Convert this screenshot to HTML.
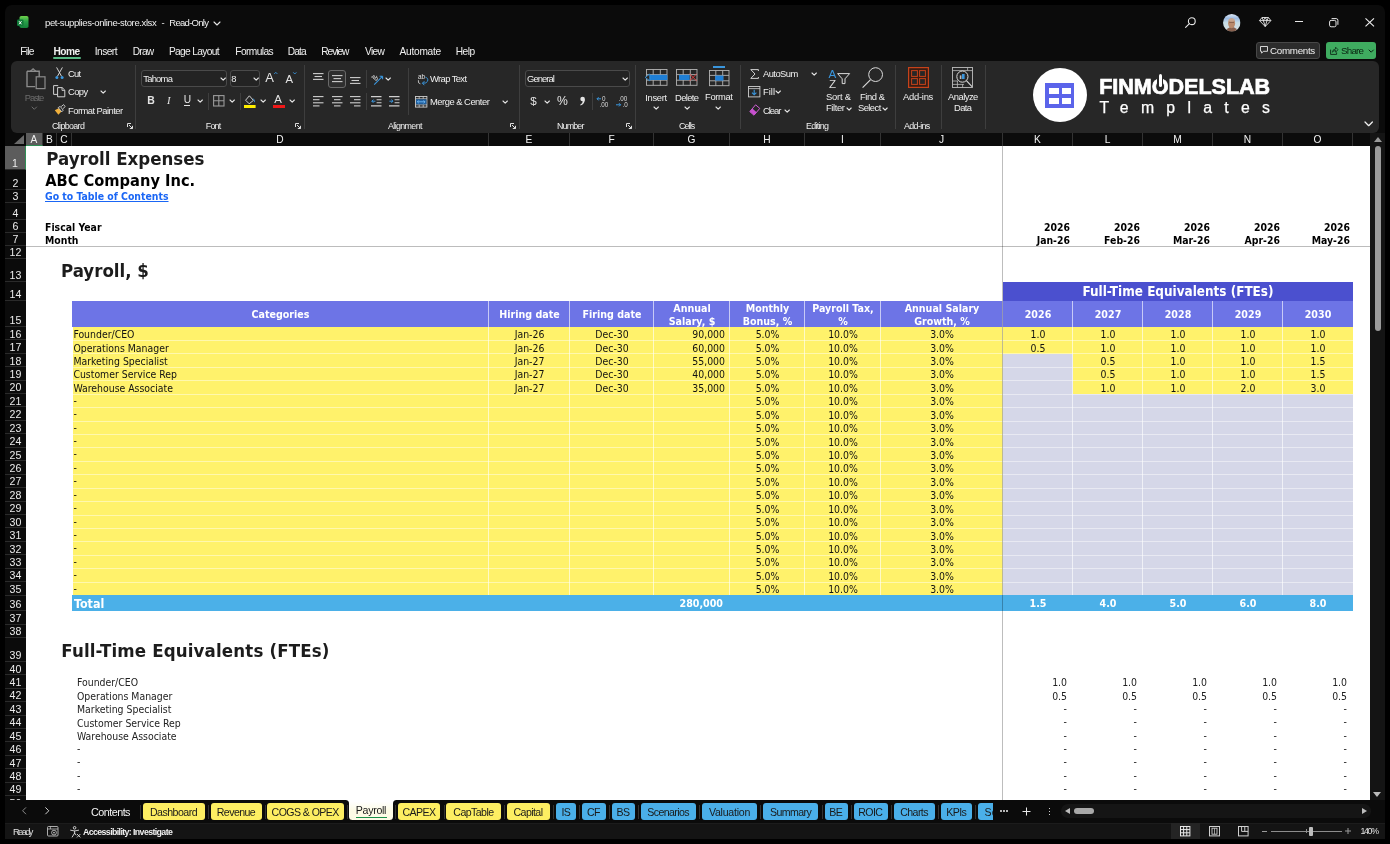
<!DOCTYPE html><html><head><meta charset="utf-8"><title>pet-supplies-online-store.xlsx - Excel</title><style>
*{box-sizing:border-box}
html,body{margin:0;padding:0}
body{width:1390px;height:844px;background:#000;position:relative;overflow:hidden;font-family:"Liberation Sans",sans-serif;color:#fff}
.abs{position:absolute}
#win{position:absolute;left:5px;top:5px;width:1380px;height:834px;background:#0b0b0b;border-radius:7px 7px 0 0}
.ui{font-family:"Liberation Sans",sans-serif;font-size:9.5px;color:#f0f0f0;white-space:nowrap;position:absolute;line-height:12px}
.t{position:absolute;white-space:nowrap;font-family:"DejaVu Sans Condensed","DejaVu Sans",sans-serif;font-stretch:condensed;font-size:10.4px;line-height:13px;color:#111}
.b{font-weight:bold}
.ch{position:absolute;top:133px;height:13px;color:#f2f2f2;font-size:10.2px;line-height:14.4px;text-align:center;font-family:"Liberation Sans",sans-serif;border-right:1px solid #333}
.rh{position:absolute;left:0;width:21px;color:#ececec;font-size:10.6px;text-align:center;font-family:"Liberation Sans",sans-serif;border-bottom:1px solid #2a2a2a}
.rh span{position:absolute;left:0;right:0;bottom:-0.4px;line-height:12px}
.cell{position:absolute}
.tab{position:absolute;top:803px;height:17px;border-radius:3px;color:#111;font-size:10.5px;line-height:17px;text-align:center;font-family:"Liberation Sans",sans-serif}
.ty{background:#fdee62}
.tb{background:#49aee8}
.sep{position:absolute;top:805px;width:1px;height:13px;background:#444}
</style></head><body>
<div id="win"></div><div id="all" style="position:absolute;left:0;top:0;width:1390px;height:844px;will-change:transform">
<div class="abs" style="left:26px;top:146px;width:1344px;height:654px;background:#fff"></div>
<div class="abs" style="left:5px;top:133px;width:1364px;height:13px;background:#0b0b0b"></div>
<div class="ch" style="left:26px;width:17px;background:#5c5c5c;border-bottom:1px solid #2f8f55;">A</div>
<div class="ch" style="left:43px;width:14px;">B</div>
<div class="ch" style="left:57px;width:15px;">C</div>
<div class="ch" style="left:72px;width:417px;">D</div>
<div class="ch" style="left:489px;width:81px;">E</div>
<div class="ch" style="left:570px;width:84px;">F</div>
<div class="ch" style="left:654px;width:76px;">G</div>
<div class="ch" style="left:730px;width:75px;">H</div>
<div class="ch" style="left:805px;width:76px;">I</div>
<div class="ch" style="left:881px;width:122px;">J</div>
<div class="ch" style="left:1003px;width:70px;">K</div>
<div class="ch" style="left:1073px;width:70px;">L</div>
<div class="ch" style="left:1143px;width:70px;">M</div>
<div class="ch" style="left:1213px;width:70px;">N</div>
<div class="ch" style="left:1283px;width:70px;">O</div>
<div class="ch" style="left:1353px;width:16px;border-right:none;"></div>
<svg class="abs" style="left:5px;top:133px" width="21" height="13"><polygon points="19,2 19,11 9,11" fill="#6a6a6a"/></svg>
<div class="abs" style="left:5px;top:146px;width:21px;height:654px;background:#0b0b0b;overflow:hidden">
<div class="rh" style="top:0.0px;height:24.0px;background:#5c5c5c;border-right:1px solid #2f8f55;"><span>1</span></div>
<div class="rh" style="top:24.0px;height:19.5px;"><span>2</span></div>
<div class="rh" style="top:43.5px;height:13.5px;"><span>3</span></div>
<div class="rh" style="top:57.0px;height:16.5px;"><span>4</span></div>
<div class="rh" style="top:73.5px;height:13.5px;"><span>6</span></div>
<div class="rh" style="top:87.0px;height:13.0px;"><span>7</span></div>
<div class="rh" style="top:100.0px;height:13.0px;"><span>12</span></div>
<div class="rh" style="top:113.0px;height:23.0px;"><span>13</span></div>
<div class="rh" style="top:136.0px;height:18.7px;"><span>14</span></div>
<div class="rh" style="top:154.7px;height:26.3px;"><span>15</span></div>
<div class="rh" style="top:181.0px;height:13.4px;"><span>16</span></div>
<div class="rh" style="top:194.4px;height:13.4px;"><span>17</span></div>
<div class="rh" style="top:207.9px;height:13.4px;"><span>18</span></div>
<div class="rh" style="top:221.3px;height:13.4px;"><span>19</span></div>
<div class="rh" style="top:234.7px;height:13.4px;"><span>20</span></div>
<div class="rh" style="top:248.1px;height:13.4px;"><span>21</span></div>
<div class="rh" style="top:261.6px;height:13.4px;"><span>22</span></div>
<div class="rh" style="top:275.0px;height:13.4px;"><span>23</span></div>
<div class="rh" style="top:288.4px;height:13.4px;"><span>24</span></div>
<div class="rh" style="top:301.9px;height:13.4px;"><span>25</span></div>
<div class="rh" style="top:315.3px;height:13.4px;"><span>26</span></div>
<div class="rh" style="top:328.7px;height:13.4px;"><span>27</span></div>
<div class="rh" style="top:342.2px;height:13.4px;"><span>28</span></div>
<div class="rh" style="top:355.6px;height:13.4px;"><span>29</span></div>
<div class="rh" style="top:369.0px;height:13.4px;"><span>30</span></div>
<div class="rh" style="top:382.5px;height:13.4px;"><span>31</span></div>
<div class="rh" style="top:395.9px;height:13.4px;"><span>32</span></div>
<div class="rh" style="top:409.3px;height:13.4px;"><span>33</span></div>
<div class="rh" style="top:422.7px;height:13.4px;"><span>34</span></div>
<div class="rh" style="top:436.2px;height:13.4px;"><span>35</span></div>
<div class="rh" style="top:449.6px;height:15.4px;"><span>36</span></div>
<div class="rh" style="top:465.0px;height:13.5px;"><span>37</span></div>
<div class="rh" style="top:478.5px;height:13.5px;"><span>38</span></div>
<div class="rh" style="top:492.0px;height:24.0px;"><span>39</span></div>
<div class="rh" style="top:516.0px;height:13.3px;"><span>40</span></div>
<div class="rh" style="top:529.3px;height:13.4px;"><span>41</span></div>
<div class="rh" style="top:542.7px;height:13.4px;"><span>42</span></div>
<div class="rh" style="top:556.2px;height:13.4px;"><span>43</span></div>
<div class="rh" style="top:569.6px;height:13.4px;"><span>44</span></div>
<div class="rh" style="top:583.0px;height:13.4px;"><span>45</span></div>
<div class="rh" style="top:596.4px;height:13.4px;"><span>46</span></div>
<div class="rh" style="top:609.9px;height:13.4px;"><span>47</span></div>
<div class="rh" style="top:623.3px;height:13.4px;"><span>48</span></div>
<div class="rh" style="top:636.7px;height:13.4px;"><span>49</span></div>
<div class="rh" style="top:650.6px;height:13.4px;border:none"><span style="bottom:auto;top:0.2px">50</span></div>
</div>
<div class="t b" style="left:46.3px;top:148.2px;font-size:18.5px;line-height:22px;color:#1c1c1c;letter-spacing:-0.01px;">Payroll Expenses</div>
<div class="t b" style="left:45.2px;top:170.7px;font-size:16.3px;line-height:19px;color:#000;letter-spacing:0.00px;">ABC Company Inc.</div>
<div class="t b" style="left:45px;top:190.3px;color:#1a66f5;text-decoration:underline;font-size:10.4px">Go to Table of Contents</div>
<div class="t b" style="left:45px;top:220.6px;color:#000;font-size:10.4px">Fiscal Year</div>
<div class="t b" style="left:45px;top:233.8px;color:#000;font-size:10.4px">Month</div>
<div class="t b" style="left:61px;top:259.8px;font-size:18.5px;line-height:22px;color:#1c1c1c">Payroll, $</div>
<div class="t b" style="left:61.3px;top:640.3px;font-size:18.5px;line-height:22px;color:#1c1c1c;letter-spacing:0.15px;">Full-Time Equivalents (FTEs)</div>
<div class="t b" style="right:320px;top:220.6px;text-align:right;color:#000;font-size:10.4px">2026</div>
<div class="t b" style="right:320px;top:233.8px;text-align:right;color:#000;font-size:10.4px">Jan-26</div>
<div class="t b" style="right:250px;top:220.6px;text-align:right;color:#000;font-size:10.4px">2026</div>
<div class="t b" style="right:250px;top:233.8px;text-align:right;color:#000;font-size:10.4px">Feb-26</div>
<div class="t b" style="right:180px;top:220.6px;text-align:right;color:#000;font-size:10.4px">2026</div>
<div class="t b" style="right:180px;top:233.8px;text-align:right;color:#000;font-size:10.4px">Mar-26</div>
<div class="t b" style="right:110px;top:220.6px;text-align:right;color:#000;font-size:10.4px">2026</div>
<div class="t b" style="right:110px;top:233.8px;text-align:right;color:#000;font-size:10.4px">Apr-26</div>
<div class="t b" style="right:40px;top:220.6px;text-align:right;color:#000;font-size:10.4px">2026</div>
<div class="t b" style="right:40px;top:233.8px;text-align:right;color:#000;font-size:10.4px">May-26</div>
<div class="cell" style="left:72px;top:300.7px;width:1281px;height:26.3px;background:#6d74e6"></div>
<div class="cell" style="left:1003px;top:282px;width:350px;height:18.7px;background:#4b50cf"></div>
<div class="t b" style="left:1003px;width:350px;top:284.4px;text-align:center;color:#fff;font-size:13.4px;line-height:15px">Full-Time Equivalents (FTEs)</div>
<div class="t b" style="left:72px;width:417px;top:308.1px;text-align:center;color:#fff;font-size:10.6px">Categories</div>
<div class="t b" style="left:489px;width:81px;top:308.1px;text-align:center;color:#fff;font-size:10.6px">Hiring date</div>
<div class="t b" style="left:570px;width:84px;top:308.1px;text-align:center;color:#fff;font-size:10.6px">Firing date</div>
<div class="t b" style="left:654px;width:76px;top:301.8px;text-align:center;color:#fff;font-size:10.6px">Annual</div>
<div class="t b" style="left:654px;width:76px;top:314.8px;text-align:center;color:#fff;font-size:10.6px">Salary, $</div>
<div class="t b" style="left:730px;width:75px;top:301.8px;text-align:center;color:#fff;font-size:10.6px">Monthly</div>
<div class="t b" style="left:730px;width:75px;top:314.8px;text-align:center;color:#fff;font-size:10.6px">Bonus, %</div>
<div class="t b" style="left:805px;width:76px;top:301.8px;text-align:center;color:#fff;font-size:10.6px">Payroll Tax,</div>
<div class="t b" style="left:805px;width:76px;top:314.8px;text-align:center;color:#fff;font-size:10.6px">%</div>
<div class="t b" style="left:881px;width:122px;top:301.8px;text-align:center;color:#fff;font-size:10.6px">Annual Salary</div>
<div class="t b" style="left:881px;width:122px;top:314.8px;text-align:center;color:#fff;font-size:10.6px">Growth, %</div>
<div class="t b" style="left:1003px;width:70px;top:308.1px;text-align:center;color:#fff;font-size:10.6px">2026</div>
<div class="t b" style="left:1073px;width:70px;top:308.1px;text-align:center;color:#fff;font-size:10.6px">2027</div>
<div class="t b" style="left:1143px;width:70px;top:308.1px;text-align:center;color:#fff;font-size:10.6px">2028</div>
<div class="t b" style="left:1213px;width:70px;top:308.1px;text-align:center;color:#fff;font-size:10.6px">2029</div>
<div class="t b" style="left:1283px;width:70px;top:308.1px;text-align:center;color:#fff;font-size:10.6px">2030</div>
<div class="cell" style="left:73px;top:327px;width:930px;height:268.6px;background:#fff26b"></div>
<div class="cell" style="left:1003px;top:327px;width:350px;height:268.6px;background:#d5d7e8"></div>
<div class="cell" style="left:1003px;top:327.0px;width:70px;height:13.7px;background:#fff26b"></div>
<div class="cell" style="left:1073px;top:327.0px;width:70px;height:13.7px;background:#fff26b"></div>
<div class="cell" style="left:1143px;top:327.0px;width:70px;height:13.7px;background:#fff26b"></div>
<div class="cell" style="left:1213px;top:327.0px;width:70px;height:13.7px;background:#fff26b"></div>
<div class="cell" style="left:1283px;top:327.0px;width:70px;height:13.7px;background:#fff26b"></div>
<div class="cell" style="left:1003px;top:340.4px;width:70px;height:13.7px;background:#fff26b"></div>
<div class="cell" style="left:1073px;top:340.4px;width:70px;height:13.7px;background:#fff26b"></div>
<div class="cell" style="left:1143px;top:340.4px;width:70px;height:13.7px;background:#fff26b"></div>
<div class="cell" style="left:1213px;top:340.4px;width:70px;height:13.7px;background:#fff26b"></div>
<div class="cell" style="left:1283px;top:340.4px;width:70px;height:13.7px;background:#fff26b"></div>
<div class="cell" style="left:1073px;top:353.9px;width:70px;height:13.7px;background:#fff26b"></div>
<div class="cell" style="left:1143px;top:353.9px;width:70px;height:13.7px;background:#fff26b"></div>
<div class="cell" style="left:1213px;top:353.9px;width:70px;height:13.7px;background:#fff26b"></div>
<div class="cell" style="left:1283px;top:353.9px;width:70px;height:13.7px;background:#fff26b"></div>
<div class="cell" style="left:1073px;top:367.3px;width:70px;height:13.7px;background:#fff26b"></div>
<div class="cell" style="left:1143px;top:367.3px;width:70px;height:13.7px;background:#fff26b"></div>
<div class="cell" style="left:1213px;top:367.3px;width:70px;height:13.7px;background:#fff26b"></div>
<div class="cell" style="left:1283px;top:367.3px;width:70px;height:13.7px;background:#fff26b"></div>
<div class="cell" style="left:1073px;top:380.7px;width:70px;height:13.7px;background:#fff26b"></div>
<div class="cell" style="left:1143px;top:380.7px;width:70px;height:13.7px;background:#fff26b"></div>
<div class="cell" style="left:1213px;top:380.7px;width:70px;height:13.7px;background:#fff26b"></div>
<div class="cell" style="left:1283px;top:380.7px;width:70px;height:13.7px;background:#fff26b"></div>
<div class="cell" style="left:72px;top:339.9px;width:1281px;height:1px;background:rgba(255,255,255,.45)"></div>
<div class="cell" style="left:72px;top:353.4px;width:1281px;height:1px;background:rgba(255,255,255,.45)"></div>
<div class="cell" style="left:72px;top:366.8px;width:1281px;height:1px;background:rgba(255,255,255,.45)"></div>
<div class="cell" style="left:72px;top:380.2px;width:1281px;height:1px;background:rgba(255,255,255,.45)"></div>
<div class="cell" style="left:72px;top:393.6px;width:1281px;height:1px;background:rgba(255,255,255,.45)"></div>
<div class="cell" style="left:72px;top:407.1px;width:1281px;height:1px;background:rgba(255,255,255,.45)"></div>
<div class="cell" style="left:72px;top:420.5px;width:1281px;height:1px;background:rgba(255,255,255,.45)"></div>
<div class="cell" style="left:72px;top:433.9px;width:1281px;height:1px;background:rgba(255,255,255,.45)"></div>
<div class="cell" style="left:72px;top:447.4px;width:1281px;height:1px;background:rgba(255,255,255,.45)"></div>
<div class="cell" style="left:72px;top:460.8px;width:1281px;height:1px;background:rgba(255,255,255,.45)"></div>
<div class="cell" style="left:72px;top:474.2px;width:1281px;height:1px;background:rgba(255,255,255,.45)"></div>
<div class="cell" style="left:72px;top:487.7px;width:1281px;height:1px;background:rgba(255,255,255,.45)"></div>
<div class="cell" style="left:72px;top:501.1px;width:1281px;height:1px;background:rgba(255,255,255,.45)"></div>
<div class="cell" style="left:72px;top:514.5px;width:1281px;height:1px;background:rgba(255,255,255,.45)"></div>
<div class="cell" style="left:72px;top:528.0px;width:1281px;height:1px;background:rgba(255,255,255,.45)"></div>
<div class="cell" style="left:72px;top:541.4px;width:1281px;height:1px;background:rgba(255,255,255,.45)"></div>
<div class="cell" style="left:72px;top:554.8px;width:1281px;height:1px;background:rgba(255,255,255,.45)"></div>
<div class="cell" style="left:72px;top:568.2px;width:1281px;height:1px;background:rgba(255,255,255,.45)"></div>
<div class="cell" style="left:72px;top:581.7px;width:1281px;height:1px;background:rgba(255,255,255,.45)"></div>
<div class="cell" style="left:488px;top:300.7px;width:1px;height:294.9px;background:rgba(255,255,255,.62)"></div>
<div class="cell" style="left:569px;top:300.7px;width:1px;height:294.9px;background:rgba(255,255,255,.62)"></div>
<div class="cell" style="left:653px;top:300.7px;width:1px;height:294.9px;background:rgba(255,255,255,.62)"></div>
<div class="cell" style="left:729px;top:300.7px;width:1px;height:294.9px;background:rgba(255,255,255,.62)"></div>
<div class="cell" style="left:804px;top:300.7px;width:1px;height:294.9px;background:rgba(255,255,255,.62)"></div>
<div class="cell" style="left:880px;top:300.7px;width:1px;height:294.9px;background:rgba(255,255,255,.62)"></div>
<div class="cell" style="left:1002px;top:300.7px;width:1px;height:294.9px;background:rgba(255,255,255,.62)"></div>
<div class="cell" style="left:1072px;top:300.7px;width:1px;height:294.9px;background:rgba(255,255,255,.62)"></div>
<div class="cell" style="left:1142px;top:300.7px;width:1px;height:294.9px;background:rgba(255,255,255,.62)"></div>
<div class="cell" style="left:1212px;top:300.7px;width:1px;height:294.9px;background:rgba(255,255,255,.62)"></div>
<div class="cell" style="left:1282px;top:300.7px;width:1px;height:294.9px;background:rgba(255,255,255,.62)"></div>
<div class="t " style="left:73.4px;top:328.1px;">Founder/CEO</div>
<div class="t " style="left:489px;width:81px;top:328.1px;text-align:center;">Jan-26</div>
<div class="t " style="left:570px;width:84px;top:328.1px;text-align:center;">Dec-30</div>
<div class="t " style="right:665px;top:328.1px;text-align:right;">90,000</div>
<div class="t " style="left:1003px;width:70px;top:328.1px;text-align:center;">1.0</div>
<div class="t " style="left:1073px;width:70px;top:328.1px;text-align:center;">1.0</div>
<div class="t " style="left:1143px;width:70px;top:328.1px;text-align:center;">1.0</div>
<div class="t " style="left:1213px;width:70px;top:328.1px;text-align:center;">1.0</div>
<div class="t " style="left:1283px;width:70px;top:328.1px;text-align:center;">1.0</div>
<div class="t " style="left:730px;width:75px;top:328.1px;text-align:center;">5.0%</div>
<div class="t " style="left:805px;width:76px;top:328.1px;text-align:center;">10.0%</div>
<div class="t " style="left:881px;width:122px;top:328.1px;text-align:center;">3.0%</div>
<div class="t " style="left:73.4px;top:341.5px;">Operations Manager</div>
<div class="t " style="left:489px;width:81px;top:341.5px;text-align:center;">Jan-26</div>
<div class="t " style="left:570px;width:84px;top:341.5px;text-align:center;">Dec-30</div>
<div class="t " style="right:665px;top:341.5px;text-align:right;">60,000</div>
<div class="t " style="left:1003px;width:70px;top:341.5px;text-align:center;">0.5</div>
<div class="t " style="left:1073px;width:70px;top:341.5px;text-align:center;">1.0</div>
<div class="t " style="left:1143px;width:70px;top:341.5px;text-align:center;">1.0</div>
<div class="t " style="left:1213px;width:70px;top:341.5px;text-align:center;">1.0</div>
<div class="t " style="left:1283px;width:70px;top:341.5px;text-align:center;">1.0</div>
<div class="t " style="left:730px;width:75px;top:341.5px;text-align:center;">5.0%</div>
<div class="t " style="left:805px;width:76px;top:341.5px;text-align:center;">10.0%</div>
<div class="t " style="left:881px;width:122px;top:341.5px;text-align:center;">3.0%</div>
<div class="t " style="left:73.4px;top:355.0px;">Marketing Specialist</div>
<div class="t " style="left:489px;width:81px;top:355.0px;text-align:center;">Jan-27</div>
<div class="t " style="left:570px;width:84px;top:355.0px;text-align:center;">Dec-30</div>
<div class="t " style="right:665px;top:355.0px;text-align:right;">55,000</div>
<div class="t " style="left:1073px;width:70px;top:355.0px;text-align:center;">0.5</div>
<div class="t " style="left:1143px;width:70px;top:355.0px;text-align:center;">1.0</div>
<div class="t " style="left:1213px;width:70px;top:355.0px;text-align:center;">1.0</div>
<div class="t " style="left:1283px;width:70px;top:355.0px;text-align:center;">1.5</div>
<div class="t " style="left:730px;width:75px;top:355.0px;text-align:center;">5.0%</div>
<div class="t " style="left:805px;width:76px;top:355.0px;text-align:center;">10.0%</div>
<div class="t " style="left:881px;width:122px;top:355.0px;text-align:center;">3.0%</div>
<div class="t " style="left:73.4px;top:368.4px;">Customer Service Rep</div>
<div class="t " style="left:489px;width:81px;top:368.4px;text-align:center;">Jan-27</div>
<div class="t " style="left:570px;width:84px;top:368.4px;text-align:center;">Dec-30</div>
<div class="t " style="right:665px;top:368.4px;text-align:right;">40,000</div>
<div class="t " style="left:1073px;width:70px;top:368.4px;text-align:center;">0.5</div>
<div class="t " style="left:1143px;width:70px;top:368.4px;text-align:center;">1.0</div>
<div class="t " style="left:1213px;width:70px;top:368.4px;text-align:center;">1.0</div>
<div class="t " style="left:1283px;width:70px;top:368.4px;text-align:center;">1.5</div>
<div class="t " style="left:730px;width:75px;top:368.4px;text-align:center;">5.0%</div>
<div class="t " style="left:805px;width:76px;top:368.4px;text-align:center;">10.0%</div>
<div class="t " style="left:881px;width:122px;top:368.4px;text-align:center;">3.0%</div>
<div class="t " style="left:73.4px;top:381.8px;">Warehouse Associate</div>
<div class="t " style="left:489px;width:81px;top:381.8px;text-align:center;">Jan-27</div>
<div class="t " style="left:570px;width:84px;top:381.8px;text-align:center;">Dec-30</div>
<div class="t " style="right:665px;top:381.8px;text-align:right;">35,000</div>
<div class="t " style="left:1073px;width:70px;top:381.8px;text-align:center;">1.0</div>
<div class="t " style="left:1143px;width:70px;top:381.8px;text-align:center;">1.0</div>
<div class="t " style="left:1213px;width:70px;top:381.8px;text-align:center;">2.0</div>
<div class="t " style="left:1283px;width:70px;top:381.8px;text-align:center;">3.0</div>
<div class="t " style="left:730px;width:75px;top:381.8px;text-align:center;">5.0%</div>
<div class="t " style="left:805px;width:76px;top:381.8px;text-align:center;">10.0%</div>
<div class="t " style="left:881px;width:122px;top:381.8px;text-align:center;">3.0%</div>
<div class="t " style="left:73.4px;top:393.6px;">-</div>
<div class="t " style="left:730px;width:75px;top:395.2px;text-align:center;">5.0%</div>
<div class="t " style="left:805px;width:76px;top:395.2px;text-align:center;">10.0%</div>
<div class="t " style="left:881px;width:122px;top:395.2px;text-align:center;">3.0%</div>
<div class="t " style="left:73.4px;top:407.1px;">-</div>
<div class="t " style="left:730px;width:75px;top:408.7px;text-align:center;">5.0%</div>
<div class="t " style="left:805px;width:76px;top:408.7px;text-align:center;">10.0%</div>
<div class="t " style="left:881px;width:122px;top:408.7px;text-align:center;">3.0%</div>
<div class="t " style="left:73.4px;top:420.5px;">-</div>
<div class="t " style="left:730px;width:75px;top:422.1px;text-align:center;">5.0%</div>
<div class="t " style="left:805px;width:76px;top:422.1px;text-align:center;">10.0%</div>
<div class="t " style="left:881px;width:122px;top:422.1px;text-align:center;">3.0%</div>
<div class="t " style="left:73.4px;top:433.9px;">-</div>
<div class="t " style="left:730px;width:75px;top:435.5px;text-align:center;">5.0%</div>
<div class="t " style="left:805px;width:76px;top:435.5px;text-align:center;">10.0%</div>
<div class="t " style="left:881px;width:122px;top:435.5px;text-align:center;">3.0%</div>
<div class="t " style="left:73.4px;top:447.4px;">-</div>
<div class="t " style="left:730px;width:75px;top:449.0px;text-align:center;">5.0%</div>
<div class="t " style="left:805px;width:76px;top:449.0px;text-align:center;">10.0%</div>
<div class="t " style="left:881px;width:122px;top:449.0px;text-align:center;">3.0%</div>
<div class="t " style="left:73.4px;top:460.8px;">-</div>
<div class="t " style="left:730px;width:75px;top:462.4px;text-align:center;">5.0%</div>
<div class="t " style="left:805px;width:76px;top:462.4px;text-align:center;">10.0%</div>
<div class="t " style="left:881px;width:122px;top:462.4px;text-align:center;">3.0%</div>
<div class="t " style="left:73.4px;top:474.2px;">-</div>
<div class="t " style="left:730px;width:75px;top:475.8px;text-align:center;">5.0%</div>
<div class="t " style="left:805px;width:76px;top:475.8px;text-align:center;">10.0%</div>
<div class="t " style="left:881px;width:122px;top:475.8px;text-align:center;">3.0%</div>
<div class="t " style="left:73.4px;top:487.7px;">-</div>
<div class="t " style="left:730px;width:75px;top:489.3px;text-align:center;">5.0%</div>
<div class="t " style="left:805px;width:76px;top:489.3px;text-align:center;">10.0%</div>
<div class="t " style="left:881px;width:122px;top:489.3px;text-align:center;">3.0%</div>
<div class="t " style="left:73.4px;top:501.1px;">-</div>
<div class="t " style="left:730px;width:75px;top:502.7px;text-align:center;">5.0%</div>
<div class="t " style="left:805px;width:76px;top:502.7px;text-align:center;">10.0%</div>
<div class="t " style="left:881px;width:122px;top:502.7px;text-align:center;">3.0%</div>
<div class="t " style="left:73.4px;top:514.5px;">-</div>
<div class="t " style="left:730px;width:75px;top:516.1px;text-align:center;">5.0%</div>
<div class="t " style="left:805px;width:76px;top:516.1px;text-align:center;">10.0%</div>
<div class="t " style="left:881px;width:122px;top:516.1px;text-align:center;">3.0%</div>
<div class="t " style="left:73.4px;top:527.9px;">-</div>
<div class="t " style="left:730px;width:75px;top:529.5px;text-align:center;">5.0%</div>
<div class="t " style="left:805px;width:76px;top:529.5px;text-align:center;">10.0%</div>
<div class="t " style="left:881px;width:122px;top:529.5px;text-align:center;">3.0%</div>
<div class="t " style="left:73.4px;top:541.4px;">-</div>
<div class="t " style="left:730px;width:75px;top:543.0px;text-align:center;">5.0%</div>
<div class="t " style="left:805px;width:76px;top:543.0px;text-align:center;">10.0%</div>
<div class="t " style="left:881px;width:122px;top:543.0px;text-align:center;">3.0%</div>
<div class="t " style="left:73.4px;top:554.8px;">-</div>
<div class="t " style="left:730px;width:75px;top:556.4px;text-align:center;">5.0%</div>
<div class="t " style="left:805px;width:76px;top:556.4px;text-align:center;">10.0%</div>
<div class="t " style="left:881px;width:122px;top:556.4px;text-align:center;">3.0%</div>
<div class="t " style="left:73.4px;top:568.2px;">-</div>
<div class="t " style="left:730px;width:75px;top:569.8px;text-align:center;">5.0%</div>
<div class="t " style="left:805px;width:76px;top:569.8px;text-align:center;">10.0%</div>
<div class="t " style="left:881px;width:122px;top:569.8px;text-align:center;">3.0%</div>
<div class="t " style="left:73.4px;top:581.7px;">-</div>
<div class="t " style="left:730px;width:75px;top:583.3px;text-align:center;">5.0%</div>
<div class="t " style="left:805px;width:76px;top:583.3px;text-align:center;">10.0%</div>
<div class="t " style="left:881px;width:122px;top:583.3px;text-align:center;">3.0%</div>
<div class="cell" style="left:72px;top:595.4px;width:1281px;height:15.6px;background:#4bb0e8"></div>
<div class="t b" style="left:74px;top:596.1px;color:#fff;font-size:12.4px;line-height:15px">Total</div>
<div class="t b" style="right:667px;top:597.2px;text-align:right;color:#fff;font-size:10.6px">280,000</div>
<div class="t b" style="left:1003px;width:70px;top:597.2px;text-align:center;color:#fff;font-size:10.6px">1.5</div>
<div class="t b" style="left:1073px;width:70px;top:597.2px;text-align:center;color:#fff;font-size:10.6px">4.0</div>
<div class="t b" style="left:1143px;width:70px;top:597.2px;text-align:center;color:#fff;font-size:10.6px">5.0</div>
<div class="t b" style="left:1213px;width:70px;top:597.2px;text-align:center;color:#fff;font-size:10.6px">6.0</div>
<div class="t b" style="left:1283px;width:70px;top:597.2px;text-align:center;color:#fff;font-size:10.6px">8.0</div>
<div class="t " style="left:77px;top:676.4px;color:#222">Founder/CEO</div>
<div class="t " style="right:323px;top:676.4px;text-align:right;color:#222">1.0</div>
<div class="t " style="right:253px;top:676.4px;text-align:right;color:#222">1.0</div>
<div class="t " style="right:183px;top:676.4px;text-align:right;color:#222">1.0</div>
<div class="t " style="right:113px;top:676.4px;text-align:right;color:#222">1.0</div>
<div class="t " style="right:43px;top:676.4px;text-align:right;color:#222">1.0</div>
<div class="t " style="left:77px;top:689.8px;color:#222">Operations Manager</div>
<div class="t " style="right:323px;top:689.8px;text-align:right;color:#222">0.5</div>
<div class="t " style="right:253px;top:689.8px;text-align:right;color:#222">0.5</div>
<div class="t " style="right:183px;top:689.8px;text-align:right;color:#222">0.5</div>
<div class="t " style="right:113px;top:689.8px;text-align:right;color:#222">0.5</div>
<div class="t " style="right:43px;top:689.8px;text-align:right;color:#222">0.5</div>
<div class="t " style="left:77px;top:703.3px;color:#222">Marketing Specialist</div>
<div class="t " style="right:323.20000000000005px;top:701.7px;text-align:right;color:#222">-</div>
<div class="t " style="right:253.20000000000005px;top:701.7px;text-align:right;color:#222">-</div>
<div class="t " style="right:183.20000000000005px;top:701.7px;text-align:right;color:#222">-</div>
<div class="t " style="right:113.20000000000005px;top:701.7px;text-align:right;color:#222">-</div>
<div class="t " style="right:43.200000000000045px;top:701.7px;text-align:right;color:#222">-</div>
<div class="t " style="left:77px;top:716.7px;color:#222">Customer Service Rep</div>
<div class="t " style="right:323.20000000000005px;top:715.1px;text-align:right;color:#222">-</div>
<div class="t " style="right:253.20000000000005px;top:715.1px;text-align:right;color:#222">-</div>
<div class="t " style="right:183.20000000000005px;top:715.1px;text-align:right;color:#222">-</div>
<div class="t " style="right:113.20000000000005px;top:715.1px;text-align:right;color:#222">-</div>
<div class="t " style="right:43.200000000000045px;top:715.1px;text-align:right;color:#222">-</div>
<div class="t " style="left:77px;top:730.1px;color:#222">Warehouse Associate</div>
<div class="t " style="right:323.20000000000005px;top:728.5px;text-align:right;color:#222">-</div>
<div class="t " style="right:253.20000000000005px;top:728.5px;text-align:right;color:#222">-</div>
<div class="t " style="right:183.20000000000005px;top:728.5px;text-align:right;color:#222">-</div>
<div class="t " style="right:113.20000000000005px;top:728.5px;text-align:right;color:#222">-</div>
<div class="t " style="right:43.200000000000045px;top:728.5px;text-align:right;color:#222">-</div>
<div class="t " style="left:77px;top:741.9px;color:#222">-</div>
<div class="t " style="right:323.20000000000005px;top:741.9px;text-align:right;color:#222">-</div>
<div class="t " style="right:253.20000000000005px;top:741.9px;text-align:right;color:#222">-</div>
<div class="t " style="right:183.20000000000005px;top:741.9px;text-align:right;color:#222">-</div>
<div class="t " style="right:113.20000000000005px;top:741.9px;text-align:right;color:#222">-</div>
<div class="t " style="right:43.200000000000045px;top:741.9px;text-align:right;color:#222">-</div>
<div class="t " style="left:77px;top:755.4px;color:#222">-</div>
<div class="t " style="right:323.20000000000005px;top:755.4px;text-align:right;color:#222">-</div>
<div class="t " style="right:253.20000000000005px;top:755.4px;text-align:right;color:#222">-</div>
<div class="t " style="right:183.20000000000005px;top:755.4px;text-align:right;color:#222">-</div>
<div class="t " style="right:113.20000000000005px;top:755.4px;text-align:right;color:#222">-</div>
<div class="t " style="right:43.200000000000045px;top:755.4px;text-align:right;color:#222">-</div>
<div class="t " style="left:77px;top:768.8px;color:#222">-</div>
<div class="t " style="right:323.20000000000005px;top:768.8px;text-align:right;color:#222">-</div>
<div class="t " style="right:253.20000000000005px;top:768.8px;text-align:right;color:#222">-</div>
<div class="t " style="right:183.20000000000005px;top:768.8px;text-align:right;color:#222">-</div>
<div class="t " style="right:113.20000000000005px;top:768.8px;text-align:right;color:#222">-</div>
<div class="t " style="right:43.200000000000045px;top:768.8px;text-align:right;color:#222">-</div>
<div class="t " style="left:77px;top:782.2px;color:#222">-</div>
<div class="t " style="right:323.20000000000005px;top:782.2px;text-align:right;color:#222">-</div>
<div class="t " style="right:253.20000000000005px;top:782.2px;text-align:right;color:#222">-</div>
<div class="t " style="right:183.20000000000005px;top:782.2px;text-align:right;color:#222">-</div>
<div class="t " style="right:113.20000000000005px;top:782.2px;text-align:right;color:#222">-</div>
<div class="t " style="right:43.200000000000045px;top:782.2px;text-align:right;color:#222">-</div>
<div class="cell" style="left:26px;top:245.6px;width:1344px;height:1px;background:#bcbcbc"></div>
<div class="cell" style="left:1002px;top:146px;width:1px;height:654px;background:rgba(0,0,0,.26)"></div>
<svg class="abs" style="left:17px;top:16px;overflow:visible" width="12" height="12" viewBox="0 0 12 12"><defs><linearGradient id="xg" x1="0" y1="0" x2="0" y2="1"><stop offset="0" stop-color="#6fd24a"/><stop offset=".45" stop-color="#2aa14a"/><stop offset="1" stop-color="#15803a"/></linearGradient></defs>
<rect x="2.5" y="0" width="9" height="12" rx="1.8" fill="url(#xg)"/><rect x="0" y="3.5" width="6.5" height="6.5" rx="1.2" fill="#0f7a38"/><path d="M2 5.2L4.5 8.3M4.5 5.2L2 8.3" stroke="#fff" stroke-width="1"/></svg>
<div class="ui" style="left:45.0px;top:16.8px;font-size:9.5px;line-height:11px;color:#f0f0f0;letter-spacing:-0.39px;">pet-supplies-online-store.xlsx</div>
<div class="ui" style="left:161.6px;top:16.8px;font-size:9.5px;line-height:11px;color:#f0f0f0;letter-spacing:0.00px;">-</div>
<div class="ui" style="left:169.3px;top:16.8px;font-size:9.5px;line-height:11px;color:#f0f0f0;letter-spacing:-0.71px;">Read-Only</div>
<svg class="abs" style="left:213.6px;top:21.9px;overflow:visible" width="6" height="3.0" viewBox="0 0 6 3.0"><polyline points="0,0 3.0,3.0 6,0" fill="none" stroke="#e6e6e6" stroke-width="1.1" stroke-linecap="round" stroke-linejoin="round"/></svg>
<svg class="abs" style="left:1185px;top:17px;overflow:visible" width="11" height="11" viewBox="0 0 11 11"><circle cx="6.8" cy="4.2" r="3.4" fill="none" stroke="#e8e8e8" stroke-width="1.1"/><path d="M4.4 6.6L0.6 10.4" stroke="#e8e8e8" stroke-width="1.1" stroke-linecap="round"/></svg>
<svg class="abs" style="left:1222.7px;top:13.6px;overflow:visible" width="17.5" height="17.5" viewBox="0 0 17.5 17.5"><defs><clipPath id="avc"><circle cx="8.75" cy="8.75" r="8.75"/></clipPath><linearGradient id="avg" x1="0" y1="0" x2="0" y2="1"><stop offset="0" stop-color="#dfe8f4"/><stop offset=".25" stop-color="#9dbbe2"/><stop offset=".5" stop-color="#c6dde6"/><stop offset="1" stop-color="#d9dfe0"/></linearGradient></defs>
<g clip-path="url(#avc)"><rect width="17.5" height="17.5" fill="url(#avg)"/><ellipse cx="8.8" cy="17.2" rx="5.2" ry="4.2" fill="#86604e"/><ellipse cx="8.6" cy="9.3" rx="3.5" ry="4.9" fill="#b98a6c"/><ellipse cx="8.6" cy="6" rx="3.1" ry="1.8" fill="#c9a68e"/><path d="M6.2 8.4H11" stroke="#6e4a3a" stroke-width="0.9" opacity=".7"/></g></svg>
<svg class="abs" style="left:1259px;top:17px;overflow:visible" width="12.4" height="10" viewBox="0 0 12.4 10"><path d="M3 0.5H9.4L11.9 3.6L6.2 9.5L0.5 3.6Z M0.5 3.6H11.9 M3 0.5L4.4 3.6L6.2 9.5L8 3.6L9.4 0.5 M6.2 0.5L4.4 3.6 M6.2 0.5L8 3.6" fill="none" stroke="#e8e8e8" stroke-width="0.9" stroke-linejoin="round"/></svg>
<div class="abs" style="left:1294.5px;top:21px;width:8.5px;height:1.2px;background:#e8e8e8"></div>
<svg class="abs" style="left:1328.5px;top:17.5px;overflow:visible" width="9.5" height="9.5" viewBox="0 0 9.5 9.5"><rect x="0.6" y="2.4" width="6.4" height="6.4" rx="1.5" fill="none" stroke="#e8e8e8" stroke-width="1"/><path d="M2.6 0.6H7.2Q8.9 0.6 8.9 2.3V6.8" fill="none" stroke="#e8e8e8" stroke-width="1"/></svg>
<svg class="abs" style="left:1364px;top:18.2px;overflow:visible" width="11.5" height="8.6" viewBox="0 0 11.5 8.6"><path d="M1.5 0.3L10 8.3M10 0.3L1.5 8.3" stroke="#f0f0f0" stroke-width="1.1"/></svg>
<div class="ui" style="left:20.2px;top:45.6px;font-size:10.2px;line-height:12px;color:#f0f0f0;letter-spacing:-0.71px;">File</div>
<div class="ui" style="left:53.4px;top:45.6px;font-size:10.2px;line-height:12px;color:#f0f0f0;letter-spacing:-0.48px;font-weight:bold;">Home</div>
<div class="ui" style="left:94.7px;top:45.6px;font-size:10.2px;line-height:12px;color:#f0f0f0;letter-spacing:-0.52px;">Insert</div>
<div class="ui" style="left:132.7px;top:45.6px;font-size:10.2px;line-height:12px;color:#f0f0f0;letter-spacing:-0.77px;">Draw</div>
<div class="ui" style="left:169.0px;top:45.6px;font-size:10.2px;line-height:12px;color:#f0f0f0;letter-spacing:-0.67px;">Page Layout</div>
<div class="ui" style="left:235.3px;top:45.6px;font-size:10.2px;line-height:12px;color:#f0f0f0;letter-spacing:-0.60px;">Formulas</div>
<div class="ui" style="left:287.7px;top:45.6px;font-size:10.2px;line-height:12px;color:#f0f0f0;letter-spacing:-0.81px;">Data</div>
<div class="ui" style="left:321.3px;top:45.6px;font-size:10.2px;line-height:12px;color:#f0f0f0;letter-spacing:-1.05px;">Review</div>
<div class="ui" style="left:365.1px;top:45.6px;font-size:10.2px;line-height:12px;color:#f0f0f0;letter-spacing:-0.74px;">View</div>
<div class="ui" style="left:399.6px;top:45.6px;font-size:10.2px;line-height:12px;color:#f0f0f0;letter-spacing:-0.29px;">Automate</div>
<div class="ui" style="left:455.8px;top:45.6px;font-size:10.2px;line-height:12px;color:#f0f0f0;letter-spacing:-0.53px;">Help</div>
<div class="abs" style="left:53px;top:57px;width:27.8px;height:2px;background:#58b884;border-radius:1px"></div>
<div class="abs" style="left:1255.5px;top:41.7px;width:64.5px;height:17.2px;background:#2c2c2c;border:1px solid #484848;border-radius:3px"></div>
<svg class="abs" style="left:1259.5px;top:46px;overflow:visible" width="8" height="8" viewBox="0 0 8 8"><path d="M0.5 0.5H7.5V5.3H3.4L1.6 7.2V5.3H0.5Z" fill="none" stroke="#e8e8e8" stroke-width="0.9" stroke-linejoin="round"/></svg>
<div class="ui" style="left:1270.0px;top:45.0px;font-size:9.8px;line-height:12px;color:#f0f0f0;letter-spacing:-0.30px;">Comments</div>
<div class="abs" style="left:1326px;top:41.7px;width:50px;height:17.2px;background:#3fac60;border-radius:3px"></div>
<svg class="abs" style="left:1329.5px;top:45.5px;overflow:visible" width="8.5" height="9" viewBox="0 0 8.5 9"><path d="M0.6 3.6V8.4H6.6V6.4" fill="none" stroke="#0d2a16" stroke-width="0.9"/><path d="M2.4 6.2Q2.6 3.2 5.6 3V1.2L8.1 3.7L5.6 6.1V4.5Q3.6 4.5 2.4 6.2Z" fill="none" stroke="#0d2a16" stroke-width="0.8" stroke-linejoin="round"/></svg>
<div class="ui" style="left:1341.0px;top:45.0px;font-size:9.8px;line-height:12px;color:#0a2512;letter-spacing:-0.79px;">Share</div>
<svg class="abs" style="left:1368.8px;top:50.1px;overflow:visible" width="4.4" height="2.2" viewBox="0 0 4.4 2.2"><polyline points="0,0 2.2,2.2 4.4,0" fill="none" stroke="#0a2512" stroke-width="1" stroke-linecap="round" stroke-linejoin="round"/></svg>
<div class="abs" style="left:11px;top:61.3px;width:1368.2px;height:71.6px;background:#272727;border-radius:6px"></div>
<div class="abs" style="left:135.4px;top:65px;width:1px;height:64px;background:#3e3e3e"></div>
<div class="abs" style="left:303.6px;top:65px;width:1px;height:64px;background:#3e3e3e"></div>
<div class="abs" style="left:519.0px;top:65px;width:1px;height:64px;background:#3e3e3e"></div>
<div class="abs" style="left:634.5px;top:65px;width:1px;height:64px;background:#3e3e3e"></div>
<div class="abs" style="left:739.8px;top:65px;width:1px;height:64px;background:#3e3e3e"></div>
<div class="abs" style="left:894.8px;top:65px;width:1px;height:64px;background:#3e3e3e"></div>
<div class="abs" style="left:941.0px;top:65px;width:1px;height:64px;background:#3e3e3e"></div>
<div class="abs" style="left:984.8px;top:65px;width:1px;height:64px;background:#3e3e3e"></div>
<svg class="abs" style="left:26px;top:67.5px;overflow:visible" width="20" height="21.5" viewBox="0 0 20 21.5"><path d="M1 3.2H13.2V12" fill="none" stroke="#8c8c8c" stroke-width="1.4"/><path d="M1 3.2V18.6H9.2" fill="none" stroke="#8c8c8c" stroke-width="1.4"/><path d="M4.2 3.4L7.1 0.8L10 3.4" fill="none" stroke="#8c8c8c" stroke-width="1.2"/><rect x="10.2" y="8.8" width="8.8" height="11.8" fill="#272727" stroke="#8c8c8c" stroke-width="1.2"/></svg>
<div class="ui" style="left:24.8px;top:91.9px;font-size:9.4px;line-height:11px;color:#6c6c6c;letter-spacing:-1.16px;">Paste</div>
<svg class="abs" style="left:31.7px;top:107.14999999999999px;overflow:visible" width="4.6" height="2.3" viewBox="0 0 4.6 2.3"><polyline points="0,0 2.3,2.3 4.6,0" fill="none" stroke="#6c6c6c" stroke-width="1" stroke-linecap="round" stroke-linejoin="round"/></svg>
<svg class="abs" style="left:55px;top:67px;overflow:visible" width="9" height="12.5" viewBox="0 0 9 12.5"><path d="M1.6 0.4L6.6 9.4M7.4 0.4L2.4 9.4" stroke="#e4e4e4" stroke-width="0.9" fill="none"/><circle cx="1.9" cy="10.6" r="1.5" fill="#3a96dd"/><circle cx="7.1" cy="10.6" r="1.5" fill="#3a96dd"/></svg>
<div class="ui" style="left:68.0px;top:67.8px;font-size:9.4px;line-height:11px;color:#f0f0f0;letter-spacing:-0.71px;">Cut</div>
<svg class="abs" style="left:53px;top:85px;overflow:visible" width="13" height="12.5" viewBox="0 0 13 12.5"><path d="M4.4 9.4H0.6V0.6H5.2" fill="none" stroke="#e4e4e4" stroke-width="0.9"/><path d="M4.6 2.6H9.2L11.8 5.2V11.8H4.6Z" fill="none" stroke="#e4e4e4" stroke-width="0.9" stroke-linejoin="round"/><path d="M9 2.8V5.4H11.6" fill="none" stroke="#e4e4e4" stroke-width="0.8"/></svg>
<div class="ui" style="left:68.0px;top:86.3px;font-size:9.4px;line-height:11px;color:#f0f0f0;letter-spacing:-0.58px;">Copy</div>
<svg class="abs" style="left:100.8px;top:91.2px;overflow:visible" width="4.4" height="2.2" viewBox="0 0 4.4 2.2"><polyline points="0,0 2.2,2.2 4.4,0" fill="none" stroke="#e6e6e6" stroke-width="1.1" stroke-linecap="round" stroke-linejoin="round"/></svg>
<svg class="abs" style="left:54px;top:104px;overflow:visible" width="12" height="11.5" viewBox="0 0 12 11.5"><path d="M0.8 6.2L4.6 4.2L7.4 7.6L4.4 10.8Z" fill="#f0b03c"/><path d="M4.2 3.6L6.2 2.4L9.2 6.2L7.8 7.8Z" fill="none" stroke="#e4e4e4" stroke-width="0.8"/><path d="M7.2 2.6L9.6 0.6L11.2 2.6L9 4.6" fill="none" stroke="#e4e4e4" stroke-width="0.8"/></svg>
<div class="ui" style="left:68.0px;top:105.0px;font-size:9.4px;line-height:11px;color:#f0f0f0;letter-spacing:-0.53px;">Format Painter</div>
<div class="ui" style="left:52.0px;top:120.5px;font-size:8.9px;line-height:11px;color:#f0f0f0;letter-spacing:-0.64px;">Clipboard</div>
<svg class="abs" style="left:127px;top:123px;overflow:visible" width="6" height="6" viewBox="0 0 6 6"><path d="M0.5 4V0.5H4" fill="none" stroke="#ddd" stroke-width="1"/><path d="M2 2L5.5 5.5M5.5 2.8V5.5H2.8" fill="none" stroke="#ddd" stroke-width="1"/></svg>
<div class="abs" style="left:141.4px;top:70px;width:86px;height:17px;border:1px solid #4a4a4a;border-radius:3px;background:#232323"></div>
<div class="ui" style="left:143.2px;top:72.9px;font-size:9.4px;line-height:11px;color:#f0f0f0;letter-spacing:-0.73px;">Tahoma</div>
<svg class="abs" style="left:221.3px;top:77.9px;overflow:visible" width="4.4" height="2.2" viewBox="0 0 4.4 2.2"><polyline points="0,0 2.2,2.2 4.4,0" fill="none" stroke="#e6e6e6" stroke-width="1.1" stroke-linecap="round" stroke-linejoin="round"/></svg>
<div class="abs" style="left:229.5px;top:70px;width:30.5px;height:17px;border:1px solid #4a4a4a;border-radius:3px;background:#232323"></div>
<div class="ui" style="left:231.2px;top:72.9px;font-size:9.4px;line-height:11px;color:#f0f0f0;letter-spacing:0.00px;">8</div>
<svg class="abs" style="left:253.8px;top:77.9px;overflow:visible" width="4.4" height="2.2" viewBox="0 0 4.4 2.2"><polyline points="0,0 2.2,2.2 4.4,0" fill="none" stroke="#e6e6e6" stroke-width="1.1" stroke-linecap="round" stroke-linejoin="round"/></svg>
<div class="ui" style="left:265.3px;top:69.9px;font-size:13px;line-height:16px;color:#e4e4e4;letter-spacing:0.00px;">A</div>
<svg class="abs" style="left:273.5px;top:71.5px;overflow:visible" width="3.6" height="2.2" viewBox="0 0 3.6 2.2"><polyline points="0.2,2 1.8,0.3 3.4,2" fill="none" stroke="#3a96dd" stroke-width="0.9"/></svg>
<div class="ui" style="left:285.4px;top:71.6px;font-size:11.3px;line-height:14px;color:#e4e4e4;letter-spacing:0.00px;">A</div>
<svg class="abs" style="left:292.6px;top:72px;overflow:visible" width="3.6" height="2.2" viewBox="0 0 3.6 2.2"><polyline points="0.2,0.3 1.8,2 3.4,0.3" fill="none" stroke="#3a96dd" stroke-width="0.9"/></svg>
<div class="ui" style="left:147.3px;top:94.5px;font-size:10.4px;line-height:12px;color:#e4e4e4;letter-spacing:0.00px;font-weight:bold;">B</div>
<div class="ui" style="left:167.0px;top:94.0px;font-size:10.6px;line-height:13px;color:#e4e4e4;letter-spacing:0.00px;font-style:italic;font-family:Liberation Serif,serif;">I</div>
<div class="ui" style="left:183.8px;top:94.3px;font-size:10.2px;line-height:12px;color:#e4e4e4;letter-spacing:0.00px;">U</div>
<div class="abs" style="left:183.8px;top:105.4px;width:6.6px;height:1px;background:#e4e4e4"></div>
<svg class="abs" style="left:198.4px;top:100.4px;overflow:visible" width="4.4" height="2.2" viewBox="0 0 4.4 2.2"><polyline points="0,0 2.2,2.2 4.4,0" fill="none" stroke="#e6e6e6" stroke-width="1.1" stroke-linecap="round" stroke-linejoin="round"/></svg>
<div class="abs" style="left:208.4px;top:93px;width:1px;height:17px;background:#3e3e3e"></div>
<svg class="abs" style="left:212.6px;top:95.2px;overflow:visible" width="11.6" height="11.6" viewBox="0 0 11.6 11.6"><rect x="0.6" y="0.6" width="10.4" height="10.4" fill="none" stroke="#9a9a9a" stroke-width="1.1"/><path d="M5.8 0.6V11M0.6 5.8H11" stroke="#9a9a9a" stroke-width="1.1"/></svg>
<svg class="abs" style="left:229.8px;top:100.4px;overflow:visible" width="4.4" height="2.2" viewBox="0 0 4.4 2.2"><polyline points="0,0 2.2,2.2 4.4,0" fill="none" stroke="#e6e6e6" stroke-width="1.1" stroke-linecap="round" stroke-linejoin="round"/></svg>
<div class="abs" style="left:239.8px;top:93px;width:1px;height:17px;background:#3e3e3e"></div>
<svg class="abs" style="left:244px;top:94.5px;overflow:visible" width="12" height="13" viewBox="0 0 12 13"><path d="M5.4 0.8L9.4 5.4L5.2 8.8L1.6 5.2Z" fill="none" stroke="#e4e4e4" stroke-width="0.9" stroke-linejoin="round"/><path d="M9.2 3.6Q11.2 5.6 10.4 7.2" fill="none" stroke="#3a96dd" stroke-width="0.9"/><rect x="0" y="10" width="11.6" height="3" fill="#ffee00"/></svg>
<svg class="abs" style="left:260.8px;top:100.4px;overflow:visible" width="4.4" height="2.2" viewBox="0 0 4.4 2.2"><polyline points="0,0 2.2,2.2 4.4,0" fill="none" stroke="#e6e6e6" stroke-width="1.1" stroke-linecap="round" stroke-linejoin="round"/></svg>
<div class="ui" style="left:274.3px;top:92.0px;font-size:11.4px;line-height:14px;color:#e4e4e4;letter-spacing:0.00px;">A</div>
<div class="abs" style="left:273px;top:104.5px;width:11.8px;height:3px;background:#f01818"></div>
<svg class="abs" style="left:290.1px;top:100.4px;overflow:visible" width="4.4" height="2.2" viewBox="0 0 4.4 2.2"><polyline points="0,0 2.2,2.2 4.4,0" fill="none" stroke="#e6e6e6" stroke-width="1.1" stroke-linecap="round" stroke-linejoin="round"/></svg>
<div class="ui" style="left:205.8px;top:120.5px;font-size:8.9px;line-height:11px;color:#f0f0f0;letter-spacing:-0.77px;">Font</div>
<svg class="abs" style="left:295px;top:123px;overflow:visible" width="6" height="6" viewBox="0 0 6 6"><path d="M0.5 4V0.5H4" fill="none" stroke="#ddd" stroke-width="1"/><path d="M2 2L5.5 5.5M5.5 2.8V5.5H2.8" fill="none" stroke="#ddd" stroke-width="1"/></svg>
<svg class="abs" style="left:313px;top:72.6px;overflow:visible" width="10.5" height="8.7" viewBox="0 0 10.5 8.7"><path d="M0.0 0.6H10.5" stroke="#cfcfcf" stroke-width="1.1"/><path d="M1.5 3.5H9.0" stroke="#cfcfcf" stroke-width="1.1"/><path d="M0.0 6.3999999999999995H10.5" stroke="#cfcfcf" stroke-width="1.1"/></svg>
<div class="abs" style="left:328px;top:70px;width:17.6px;height:17.6px;border:1px solid #6a6a6a;border-radius:3px;background:#2f2f2f"></div>
<svg class="abs" style="left:331.5px;top:74.6px;overflow:visible" width="10.5" height="9.0" viewBox="0 0 10.5 9.0"><path d="M0.0 0.6H10.5" stroke="#cfcfcf" stroke-width="1.1"/><path d="M1.5 3.6H9.0" stroke="#cfcfcf" stroke-width="1.1"/><path d="M0.0 6.6H10.5" stroke="#cfcfcf" stroke-width="1.1"/></svg>
<svg class="abs" style="left:350px;top:77px;overflow:visible" width="10.5" height="8.7" viewBox="0 0 10.5 8.7"><path d="M0.0 0.6H10.5" stroke="#cfcfcf" stroke-width="1.1"/><path d="M1.5 3.5H9.0" stroke="#cfcfcf" stroke-width="1.1"/><path d="M0.0 6.3999999999999995H10.5" stroke="#cfcfcf" stroke-width="1.1"/></svg>
<div class="abs" style="left:366.0px;top:70px;width:1px;height:18px;background:#3e3e3e"></div>
<svg class="abs" style="left:371px;top:72.5px;overflow:visible" width="13" height="13" viewBox="0 0 13 13"><path d="M3.2 11.6L11.4 3.4M11.6 3.2V6.2M11.6 3.2H8.6" fill="none" stroke="#3a96dd" stroke-width="1.1"/><text x="0" y="6" font-size="6.2" fill="#e4e4e4" font-family="Liberation Sans,sans-serif" transform="rotate(38 3 5)">ab</text></svg>
<svg class="abs" style="left:386.1px;top:78.4px;overflow:visible" width="4.4" height="2.2" viewBox="0 0 4.4 2.2"><polyline points="0,0 2.2,2.2 4.4,0" fill="none" stroke="#e6e6e6" stroke-width="1.1" stroke-linecap="round" stroke-linejoin="round"/></svg>
<div class="abs" style="left:407.6px;top:68px;width:1px;height:47px;background:#3e3e3e"></div>
<svg class="abs" style="left:416.5px;top:72.5px;overflow:visible" width="12" height="13" viewBox="0 0 12 13"><text x="1" y="5.6" font-size="6.4" fill="#e4e4e4" font-family="Liberation Sans,sans-serif">ab</text><path d="M1.4 7.2Q0.6 10.4 3.4 10.8" fill="none" stroke="#e4e4e4" stroke-width="0.8"/><path d="M8.4 4.2Q11.6 5.2 10.6 8.2Q9.6 10.6 5.6 10.2M7.4 8.2L5.4 10.2L7.4 12.2" fill="none" stroke="#3a96dd" stroke-width="1"/></svg>
<div class="ui" style="left:430.0px;top:73.3px;font-size:9.4px;line-height:11px;color:#f0f0f0;letter-spacing:-0.60px;">Wrap Text</div>
<svg class="abs" style="left:313px;top:96.2px;overflow:visible" width="10.5" height="12.4" viewBox="0 0 10.5 12.4"><path d="M0 0.6H10.5" stroke="#cfcfcf" stroke-width="1.1"/><path d="M0 3.7H6.5" stroke="#cfcfcf" stroke-width="1.1"/><path d="M0 6.8H10.5" stroke="#cfcfcf" stroke-width="1.1"/><path d="M0 9.9H6.5" stroke="#cfcfcf" stroke-width="1.1"/></svg>
<svg class="abs" style="left:331.5px;top:96.2px;overflow:visible" width="10.5" height="12.4" viewBox="0 0 10.5 12.4"><path d="M0.0 0.6H10.5" stroke="#cfcfcf" stroke-width="1.1"/><path d="M2.0 3.7H8.5" stroke="#cfcfcf" stroke-width="1.1"/><path d="M0.0 6.8H10.5" stroke="#cfcfcf" stroke-width="1.1"/><path d="M2.0 9.9H8.5" stroke="#cfcfcf" stroke-width="1.1"/></svg>
<svg class="abs" style="left:350px;top:96.2px;overflow:visible" width="10.5" height="12.4" viewBox="0 0 10.5 12.4"><path d="M0.0 0.6H10.5" stroke="#cfcfcf" stroke-width="1.1"/><path d="M4.0 3.7H10.5" stroke="#cfcfcf" stroke-width="1.1"/><path d="M0.0 6.8H10.5" stroke="#cfcfcf" stroke-width="1.1"/><path d="M4.0 9.9H10.5" stroke="#cfcfcf" stroke-width="1.1"/></svg>
<div class="abs" style="left:366.0px;top:93px;width:1px;height:17px;background:#3e3e3e"></div>
<svg class="abs" style="left:371px;top:96px;overflow:visible" width="11" height="10.5" viewBox="0 0 11 10.5"><path d="M0 0.6H10.5M5.6 3.7H10.5M5.6 6.8H10.5M0 9.9H10.5" stroke="#cfcfcf" stroke-width="1.1"/><path d="M4.4 5.2H0.8M2.4 3.6L0.8 5.2L2.4 6.8" fill="none" stroke="#3a96dd" stroke-width="1"/></svg>
<svg class="abs" style="left:389.3px;top:96px;overflow:visible" width="11" height="10.5" viewBox="0 0 11 10.5"><path d="M0 0.6H10.5M5.6 3.7H10.5M5.6 6.8H10.5M0 9.9H10.5" stroke="#cfcfcf" stroke-width="1.1"/><path d="M0.4 5.2H4M2.4 3.6L4 5.2L2.4 6.8" fill="none" stroke="#3a96dd" stroke-width="1"/></svg>
<svg class="abs" style="left:415px;top:95.6px;overflow:visible" width="12.4" height="11.6" viewBox="0 0 12.4 11.6"><rect x="0.5" y="0.5" width="11.4" height="10.6" fill="none" stroke="#cfcfcf" stroke-width="0.9"/><path d="M0.5 2.8H11.9M0.5 8.8H11.9M4.2 0.5V2.8M8.2 0.5V2.8M4.2 8.8V11.1M8.2 8.8V11.1" stroke="#cfcfcf" stroke-width="0.8"/><rect x="1" y="3.3" width="10.4" height="5" fill="#1f5f9e"/><path d="M2.4 5.8H10M3.8 4.4L2.4 5.8L3.8 7.2M8.6 4.4L10 5.8L8.6 7.2" fill="none" stroke="#7cc4ff" stroke-width="0.8"/></svg>
<div class="ui" style="left:430.0px;top:96.1px;font-size:9.4px;line-height:11px;color:#f0f0f0;letter-spacing:-0.49px;">Merge &amp; Center</div>
<svg class="abs" style="left:502.8px;top:101.2px;overflow:visible" width="4.4" height="2.2" viewBox="0 0 4.4 2.2"><polyline points="0,0 2.2,2.2 4.4,0" fill="none" stroke="#e6e6e6" stroke-width="1.1" stroke-linecap="round" stroke-linejoin="round"/></svg>
<div class="ui" style="left:388.0px;top:120.5px;font-size:8.9px;line-height:11px;color:#f0f0f0;letter-spacing:-0.63px;">Alignment</div>
<svg class="abs" style="left:510px;top:123px;overflow:visible" width="6" height="6" viewBox="0 0 6 6"><path d="M0.5 4V0.5H4" fill="none" stroke="#ddd" stroke-width="1"/><path d="M2 2L5.5 5.5M5.5 2.8V5.5H2.8" fill="none" stroke="#ddd" stroke-width="1"/></svg>
<div class="abs" style="left:525px;top:70px;width:104.6px;height:17px;border:1px solid #4a4a4a;border-radius:3px;background:#232323"></div>
<div class="ui" style="left:527.0px;top:72.9px;font-size:9.4px;line-height:11px;color:#f0f0f0;letter-spacing:-0.91px;">General</div>
<svg class="abs" style="left:622.8px;top:77.9px;overflow:visible" width="4.4" height="2.2" viewBox="0 0 4.4 2.2"><polyline points="0,0 2.2,2.2 4.4,0" fill="none" stroke="#e6e6e6" stroke-width="1.1" stroke-linecap="round" stroke-linejoin="round"/></svg>
<div class="ui" style="left:530.3px;top:94.2px;font-size:11.6px;line-height:14px;color:#e4e4e4;letter-spacing:0.00px;">$</div>
<svg class="abs" style="left:544.8px;top:100.7px;overflow:visible" width="4.4" height="2.2" viewBox="0 0 4.4 2.2"><polyline points="0,0 2.2,2.2 4.4,0" fill="none" stroke="#e6e6e6" stroke-width="1.1" stroke-linecap="round" stroke-linejoin="round"/></svg>
<div class="ui" style="left:557.0px;top:93.9px;font-size:12.2px;line-height:15px;color:#e4e4e4;letter-spacing:0.00px;">%</div>
<svg class="abs" style="left:579px;top:96px;overflow:visible" width="7" height="11" viewBox="0 0 7 11"><circle cx="3.6" cy="3" r="2.3" fill="#e4e4e4"/><path d="M5.9 3Q6.1 7.6 1.6 9.6L1.2 8.8Q4 7.2 3.8 4.6Z" fill="#e4e4e4"/></svg>
<div class="abs" style="left:591.5px;top:93px;width:1px;height:17px;background:#3e3e3e"></div>
<svg class="abs" style="left:596px;top:95.5px;overflow:visible" width="12.5" height="11.5" viewBox="0 0 12.5 11.5"><text x="6" y="4.8" font-size="6.3" fill="#dcdcdc" font-family="Liberation Sans,sans-serif">0</text><text x="3.4" y="11" font-size="6.3" fill="#dcdcdc" font-family="Liberation Sans,sans-serif">.00</text><path d="M5 2.8H1M2.6 1.2L1 2.8L2.6 4.4" fill="none" stroke="#3a96dd" stroke-width="1"/></svg>
<svg class="abs" style="left:614.5px;top:95.5px;overflow:visible" width="12.5" height="11.5" viewBox="0 0 12.5 11.5"><text x="3.6" y="4.8" font-size="6.3" fill="#dcdcdc" font-family="Liberation Sans,sans-serif">.00</text><text x="7.4" y="11" font-size="6.3" fill="#dcdcdc" font-family="Liberation Sans,sans-serif">.0</text><path d="M1 8.8H5.6M4 7.2L5.6 8.8L4 10.4" fill="none" stroke="#3a96dd" stroke-width="1"/></svg>
<div class="ui" style="left:557.0px;top:120.5px;font-size:8.9px;line-height:11px;color:#f0f0f0;letter-spacing:-0.83px;">Number</div>
<svg class="abs" style="left:626px;top:123px;overflow:visible" width="6" height="6" viewBox="0 0 6 6"><path d="M0.5 4V0.5H4" fill="none" stroke="#ddd" stroke-width="1"/><path d="M2 2L5.5 5.5M5.5 2.8V5.5H2.8" fill="none" stroke="#ddd" stroke-width="1"/></svg>
<svg class="abs" style="left:645.5px;top:69px;overflow:visible" width="21.5" height="16.8" viewBox="0 0 21.5 16.8"><rect x="0.5" y="0.5" width="20.5" height="15.8" fill="none" stroke="#b4b4b4" stroke-width="0.9"/><path d="M0.5 5.6H21.0M0.5 11.2H21.0M7.2 0.5V16.3M14.3 0.5V16.3" stroke="#b4b4b4" stroke-width="0.9"/><rect x="2.4" y="5.8" width="19" height="5.2" fill="#1f7fd6"/><path d="M3.8 5V11.8L-0.8 8.4Z" fill="#272727" stroke="#3a96dd" stroke-width="0.9"/></svg>
<div class="ui" style="left:645.2px;top:91.9px;font-size:9.4px;line-height:11px;color:#f0f0f0;letter-spacing:-0.30px;">Insert</div>
<svg class="abs" style="left:653.8px;top:107.2px;overflow:visible" width="4.4" height="2.2" viewBox="0 0 4.4 2.2"><polyline points="0,0 2.2,2.2 4.4,0" fill="none" stroke="#e6e6e6" stroke-width="1.1" stroke-linecap="round" stroke-linejoin="round"/></svg>
<svg class="abs" style="left:676.4px;top:69px;overflow:visible" width="21.5" height="16.8" viewBox="0 0 21.5 16.8"><rect x="0.5" y="0.5" width="20.5" height="15.8" fill="none" stroke="#b4b4b4" stroke-width="0.9"/><path d="M0.5 5.6H21.0M0.5 11.2H21.0M7.2 0.5V16.3M14.3 0.5V16.3" stroke="#b4b4b4" stroke-width="0.9"/><rect x="3" y="5.8" width="10.6" height="5.2" fill="#1f7fd6"/><path d="M13.6 5L20.6 11.8M20.6 5L13.6 11.8" stroke="#e03c3c" stroke-width="1"/></svg>
<div class="ui" style="left:675.0px;top:91.9px;font-size:9.4px;line-height:11px;color:#f0f0f0;letter-spacing:-0.63px;">Delete</div>
<svg class="abs" style="left:684.8px;top:107.2px;overflow:visible" width="4.4" height="2.2" viewBox="0 0 4.4 2.2"><polyline points="0,0 2.2,2.2 4.4,0" fill="none" stroke="#e6e6e6" stroke-width="1.1" stroke-linecap="round" stroke-linejoin="round"/></svg>
<svg class="abs" style="left:708.5px;top:69.6px;overflow:visible" width="20.5" height="16.2" viewBox="0 0 20.5 16.2"><rect x="0.5" y="0.5" width="19.5" height="15.2" fill="none" stroke="#b4b4b4" stroke-width="0.9"/><path d="M0.5 5.4H20.0M0.5 10.8H20.0M6.8 0.5V15.7M13.7 0.5V15.7" stroke="#b4b4b4" stroke-width="0.9"/><rect x="6.2" y="5.6" width="8.2" height="5" fill="#1f7fd6"/></svg>
<div class="abs" style="left:713px;top:66.4px;width:12px;height:1.2px;background:#3a96dd"></div>
<div class="ui" style="left:705.0px;top:91.1px;font-size:9.4px;line-height:11px;color:#f0f0f0;letter-spacing:-0.35px;">Format</div>
<svg class="abs" style="left:716.3px;top:106.5px;overflow:visible" width="4.4" height="2.2" viewBox="0 0 4.4 2.2"><polyline points="0,0 2.2,2.2 4.4,0" fill="none" stroke="#e6e6e6" stroke-width="1.1" stroke-linecap="round" stroke-linejoin="round"/></svg>
<div class="ui" style="left:679.0px;top:120.5px;font-size:8.9px;line-height:11px;color:#f0f0f0;letter-spacing:-0.87px;">Cells</div>
<svg class="abs" style="left:750px;top:68.5px;overflow:visible" width="9" height="10" viewBox="0 0 9 10"><path d="M8.4 2V0.6H0.8L5 5L0.8 9.4H8.4V8" fill="none" stroke="#e4e4e4" stroke-width="0.9" stroke-linejoin="round"/></svg>
<div class="ui" style="left:763.0px;top:67.6px;font-size:9.4px;line-height:11px;color:#f0f0f0;letter-spacing:-0.56px;">AutoSum</div>
<svg class="abs" style="left:811.8px;top:72.5px;overflow:visible" width="4.4" height="2.2" viewBox="0 0 4.4 2.2"><polyline points="0,0 2.2,2.2 4.4,0" fill="none" stroke="#e6e6e6" stroke-width="1.1" stroke-linecap="round" stroke-linejoin="round"/></svg>
<svg class="abs" style="left:748px;top:86px;overflow:visible" width="12.4" height="11.4" viewBox="0 0 12.4 11.4"><rect x="0.5" y="0.5" width="11.4" height="10.4" fill="none" stroke="#cfcfcf" stroke-width="0.9"/><path d="M0.5 2.6H11.9" stroke="#cfcfcf" stroke-width="0.8"/><path d="M6.2 3.8V8.6M4 6.6L6.2 8.8L8.4 6.6" fill="none" stroke="#3a96dd" stroke-width="1.1"/></svg>
<div class="ui" style="left:763.0px;top:86.3px;font-size:9.4px;line-height:11px;color:#f0f0f0;letter-spacing:-0.00px;">Fill</div>
<svg class="abs" style="left:776.4px;top:91.30000000000001px;overflow:visible" width="4.4" height="2.2" viewBox="0 0 4.4 2.2"><polyline points="0,0 2.2,2.2 4.4,0" fill="none" stroke="#e6e6e6" stroke-width="1.1" stroke-linecap="round" stroke-linejoin="round"/></svg>
<svg class="abs" style="left:749px;top:104px;overflow:visible" width="11.5" height="12" viewBox="0 0 11.5 12"><path d="M6.6 0.8L10.8 4.4L5 11.2L0.8 7.6Z" fill="none" stroke="#d060d6" stroke-width="1" stroke-linejoin="round"/><path d="M3.4 4.6L7.6 8.2L5 11.2L0.8 7.6Z" fill="#c850d0"/></svg>
<div class="ui" style="left:763.0px;top:104.7px;font-size:9.4px;line-height:11px;color:#f0f0f0;letter-spacing:-1.02px;">Clear</div>
<svg class="abs" style="left:785.0999999999999px;top:109.7px;overflow:visible" width="4.4" height="2.2" viewBox="0 0 4.4 2.2"><polyline points="0,0 2.2,2.2 4.4,0" fill="none" stroke="#e6e6e6" stroke-width="1.1" stroke-linecap="round" stroke-linejoin="round"/></svg>
<svg class="abs" style="left:828px;top:68px;overflow:visible" width="23" height="20.5" viewBox="0 0 23 20.5"><text x="0.5" y="9.6" font-size="11.6" fill="#3a96dd" font-family="Liberation Sans,sans-serif">A</text><text x="1" y="20" font-size="11.6" fill="#dcdcdc" font-family="Liberation Sans,sans-serif">Z</text><path d="M9.6 5.6H21.6L17 10.8V15.6H14.2V10.8Z" fill="none" stroke="#dcdcdc" stroke-width="1" stroke-linejoin="round"/></svg>
<div class="ui" style="left:826.0px;top:91.3px;font-size:9.4px;line-height:11px;color:#f0f0f0;letter-spacing:-0.22px;">Sort &amp;</div>
<div class="ui" style="left:826.0px;top:102.3px;font-size:9.4px;line-height:11px;color:#f0f0f0;letter-spacing:-0.38px;">Filter</div>
<svg class="abs" style="left:847.1999999999999px;top:107.55px;overflow:visible" width="4.2" height="2.1" viewBox="0 0 4.2 2.1"><polyline points="0,0 2.1,2.1 4.2,0" fill="none" stroke="#e6e6e6" stroke-width="1.1" stroke-linecap="round" stroke-linejoin="round"/></svg>
<svg class="abs" style="left:862px;top:67px;overflow:visible" width="21.5" height="21.5" viewBox="0 0 21.5 21.5"><circle cx="13.6" cy="7.6" r="6.9" fill="none" stroke="#dcdcdc" stroke-width="1"/><path d="M8.6 12.6L0.6 20.6" stroke="#dcdcdc" stroke-width="1.1"/></svg>
<div class="ui" style="left:860.0px;top:91.3px;font-size:9.4px;line-height:11px;color:#f0f0f0;letter-spacing:-0.43px;">Find &amp;</div>
<div class="ui" style="left:858.0px;top:102.3px;font-size:9.4px;line-height:11px;color:#f0f0f0;letter-spacing:-0.56px;">Select</div>
<svg class="abs" style="left:883.3px;top:107.55px;overflow:visible" width="4.2" height="2.1" viewBox="0 0 4.2 2.1"><polyline points="0,0 2.1,2.1 4.2,0" fill="none" stroke="#e6e6e6" stroke-width="1.1" stroke-linecap="round" stroke-linejoin="round"/></svg>
<div class="ui" style="left:806.0px;top:120.5px;font-size:8.9px;line-height:11px;color:#f0f0f0;letter-spacing:-0.70px;">Editing</div>
<svg class="abs" style="left:907.5px;top:67px;overflow:visible" width="21" height="21" viewBox="0 0 21 21"><rect x="0.6" y="0.6" width="19.8" height="19.8" fill="#3a1c12" stroke="#c6421a" stroke-width="1.2"/><rect x="3.6" y="3.6" width="5.8" height="5.8" fill="#272727" stroke="#c6421a" stroke-width="1"/><rect x="11.6" y="3.6" width="5.8" height="5.8" fill="#272727" stroke="#c6421a" stroke-width="1"/><rect x="3.6" y="11.6" width="5.8" height="5.8" fill="#272727" stroke="#c6421a" stroke-width="1"/><rect x="11.6" y="11.6" width="5.8" height="5.8" fill="#272727" stroke="#c6421a" stroke-width="1"/></svg>
<div class="ui" style="left:903.0px;top:91.3px;font-size:9.4px;line-height:11px;color:#f0f0f0;letter-spacing:-0.25px;">Add-ins</div>
<div class="ui" style="left:904.0px;top:120.5px;font-size:8.9px;line-height:11px;color:#f0f0f0;letter-spacing:-0.63px;">Add-ins</div>
<svg class="abs" style="left:952px;top:67px;overflow:visible" width="21" height="21" viewBox="0 0 21 21"><rect x="0.5" y="0.5" width="20" height="20" fill="none" stroke="#bdbdbd" stroke-width="0.9"/><path d="M0.5 3.6H20.5M0.5 14H6M0.5 17.4H12M5.4 14V20.5M10.6 17V20.5M15.6 3.6V0.5" stroke="#bdbdbd" stroke-width="0.8"/><circle cx="10.4" cy="9.6" r="5.6" fill="#272727" stroke="#dcdcdc" stroke-width="1"/><path d="M14.4 13.6L20 19.6" stroke="#dcdcdc" stroke-width="1.1"/><rect x="7.8" y="8.4" width="1.6" height="3.6" fill="#bdbdbd"/><rect x="10" y="7" width="2.6" height="5" fill="#3a96dd"/></svg>
<div class="ui" style="left:948.0px;top:91.3px;font-size:9.4px;line-height:11px;color:#f0f0f0;letter-spacing:-0.51px;">Analyze</div>
<div class="ui" style="left:954.0px;top:102.3px;font-size:9.4px;line-height:11px;color:#f0f0f0;letter-spacing:-0.62px;">Data</div>
<div class="abs" style="left:1032.6px;top:68px;width:54.4px;height:54.4px;border-radius:50%;background:#fff"></div>
<div class="abs" style="left:1044.9px;top:82.9px;width:29.5px;height:25.2px;background:#5b64ea"></div>
<div class="abs" style="left:1048.7px;top:87.5px;width:10.3px;height:6.5px;background:#fff"></div>
<div class="abs" style="left:1062.3px;top:87.5px;width:8.6px;height:6.5px;background:#fff"></div>
<div class="abs" style="left:1048.7px;top:97.8px;width:10.3px;height:6.4px;background:#fff"></div>
<div class="abs" style="left:1062.3px;top:97.8px;width:8.6px;height:6.4px;background:#fff"></div>
<div class="ui" style="left:1099.2px;top:73.8px;font-size:21.6px;line-height:26px;color:#fff;letter-spacing:-0.05px;font-weight:bold;-webkit-text-stroke:0.7px #fff;">FINMODELSLAB</div>
<div class="abs" style="left:1157.0px;top:74.4px;width:6.4px;height:12.4px;background:#272727;border-radius:3px 3px 0 0"></div>
<div class="abs" style="left:1158.5px;top:74.4px;width:3.4px;height:12.2px;background:#fff;border-radius:1.7px"></div>
<div class="ui" style="left:1099.6px;top:98.4px;font-size:15.8px;line-height:19px;color:#fff;letter-spacing:12.30px;-webkit-text-stroke:0.25px #fff;">Templates</div>
<svg class="abs" style="left:1364.6px;top:121.55000000000001px;overflow:visible" width="7.4" height="3.7" viewBox="0 0 7.4 3.7"><polyline points="0,0 3.7,3.7 7.4,0" fill="none" stroke="#f0f0f0" stroke-width="1.3" stroke-linecap="round" stroke-linejoin="round"/></svg>
<div class="abs" style="left:1370px;top:133px;width:14.6px;height:667px;background:#141414"></div>
<svg class="abs" style="left:1373.6px;top:136.6px;overflow:visible" width="8" height="5" viewBox="0 0 8 5"><polygon points="4,0 8,5 0,5" fill="#9a9a9a"/></svg>
<div class="abs" style="left:1374.8px;top:146px;width:6.4px;height:185px;background:#9a9a9a;border-radius:3.2px"></div>
<svg class="abs" style="left:1373.4px;top:792px;overflow:visible" width="8" height="5" viewBox="0 0 8 5"><polygon points="0,0 8,0 4,5" fill="#bdbdbd"/></svg>
<div class="abs" style="left:340px;top:799px;width:62px;height:6px;background:#fff"></div>
<div class="abs" style="left:5px;top:800px;width:344.3px;height:22.6px;background:#0b0b0b;border-top-right-radius:3.5px"></div>
<div class="abs" style="left:392.7px;top:800px;width:992.3px;height:22.6px;background:#0b0b0b;border-top-left-radius:3.5px"></div>
<div class="abs" style="left:349.3px;top:815px;width:43.4px;height:7.6px;background:#0b0b0b"></div>
<svg class="abs" style="left:21.6px;top:806.6px;overflow:visible" width="4.4" height="7.6" viewBox="0 0 4.4 7.6"><polyline points="4,0.4 0.6,3.8 4,7.2" fill="none" stroke="#8a8a8a" stroke-width="1"/></svg>
<svg class="abs" style="left:45.2px;top:806.6px;overflow:visible" width="4.4" height="7.6" viewBox="0 0 4.4 7.6"><polyline points="0.4,0.4 3.8,3.8 0.4,7.2" fill="none" stroke="#cfcfcf" stroke-width="1"/></svg>
<div class="ui" style="left:91.0px;top:805.7px;font-size:10.8px;line-height:13px;color:#f4f4f4;letter-spacing:-0.53px;">Contents</div>
<div class="abs" style="left:143px;top:803px;width:61.5px;height:17px;background:#fdee62;border-radius:3px"></div>
<div class="ui" style="left:149.9px;top:805.6px;font-size:10.6px;line-height:13px;color:#1a1a1a;letter-spacing:-0.52px;">Dashboard</div>
<div class="abs" style="left:211px;top:803px;width:50.5px;height:17px;background:#fdee62;border-radius:3px"></div>
<div class="ui" style="left:216.8px;top:805.6px;font-size:10.6px;line-height:13px;color:#1a1a1a;letter-spacing:-0.58px;">Revenue</div>
<div class="abs" style="left:267.4px;top:803px;width:76.3px;height:17px;background:#fdee62;border-radius:3px"></div>
<div class="ui" style="left:271.6px;top:805.6px;font-size:10.6px;line-height:13px;color:#1a1a1a;letter-spacing:-0.58px;">COGS &amp; OPEX</div>
<div class="abs" style="left:398.2px;top:803px;width:42.3px;height:17px;background:#fdee62;border-radius:3px"></div>
<div class="ui" style="left:402.5px;top:805.6px;font-size:10.6px;line-height:13px;color:#1a1a1a;letter-spacing:-0.58px;">CAPEX</div>
<div class="abs" style="left:446.4px;top:803px;width:54.6px;height:17px;background:#fdee62;border-radius:3px"></div>
<div class="ui" style="left:453.3px;top:805.6px;font-size:10.6px;line-height:13px;color:#1a1a1a;letter-spacing:-0.57px;">CapTable</div>
<div class="abs" style="left:506.6px;top:803px;width:43.3px;height:17px;background:#fdee62;border-radius:3px"></div>
<div class="ui" style="left:513.5px;top:805.6px;font-size:10.6px;line-height:13px;color:#1a1a1a;letter-spacing:-0.58px;">Capital</div>
<div class="abs" style="left:556px;top:803px;width:20.2px;height:17px;background:#4aafe9;border-radius:3px"></div>
<div class="ui" style="left:561.4px;top:805.6px;font-size:10.6px;line-height:13px;color:#1a1a1a;letter-spacing:-0.58px;">IS</div>
<div class="abs" style="left:582px;top:803px;width:23.6px;height:17px;background:#4aafe9;border-radius:3px"></div>
<div class="ui" style="left:587.0px;top:805.6px;font-size:10.6px;line-height:13px;color:#1a1a1a;letter-spacing:-0.58px;">CF</div>
<div class="abs" style="left:611.7px;top:803px;width:23.2px;height:17px;background:#4aafe9;border-radius:3px"></div>
<div class="ui" style="left:616.5px;top:805.6px;font-size:10.6px;line-height:13px;color:#1a1a1a;letter-spacing:-0.58px;">BS</div>
<div class="abs" style="left:640.8px;top:803px;width:55.2px;height:17px;background:#4aafe9;border-radius:3px"></div>
<div class="ui" style="left:647.2px;top:805.6px;font-size:10.6px;line-height:13px;color:#1a1a1a;letter-spacing:-0.58px;">Scenarios</div>
<div class="abs" style="left:702px;top:803px;width:55.2px;height:17px;background:#4aafe9;border-radius:3px"></div>
<div class="ui" style="left:708.9px;top:805.6px;font-size:10.6px;line-height:13px;color:#1a1a1a;letter-spacing:-0.25px;">Valuation</div>
<div class="abs" style="left:763.3px;top:803px;width:55.1px;height:17px;background:#4aafe9;border-radius:3px"></div>
<div class="ui" style="left:769.9px;top:805.6px;font-size:10.6px;line-height:13px;color:#1a1a1a;letter-spacing:-0.58px;">Summary</div>
<div class="abs" style="left:824.5px;top:803px;width:23.0px;height:17px;background:#4aafe9;border-radius:3px"></div>
<div class="ui" style="left:829.2px;top:805.6px;font-size:10.6px;line-height:13px;color:#1a1a1a;letter-spacing:-0.58px;">BE</div>
<div class="abs" style="left:853.5px;top:803px;width:34.2px;height:17px;background:#4aafe9;border-radius:3px"></div>
<div class="ui" style="left:858.2px;top:805.6px;font-size:10.6px;line-height:13px;color:#1a1a1a;letter-spacing:-0.58px;">ROIC</div>
<div class="abs" style="left:893.8px;top:803px;width:41.1px;height:17px;background:#4aafe9;border-radius:3px"></div>
<div class="ui" style="left:900.2px;top:805.6px;font-size:10.6px;line-height:13px;color:#1a1a1a;letter-spacing:-0.58px;">Charts</div>
<div class="abs" style="left:941px;top:803px;width:31.1px;height:17px;background:#4aafe9;border-radius:3px"></div>
<div class="ui" style="left:946.2px;top:805.6px;font-size:10.6px;line-height:13px;color:#1a1a1a;letter-spacing:-0.58px;">KPIs</div>
<div class="abs" style="left:978.2px;top:803px;width:14.8px;height:17px;background:#4aafe9;border-radius:3px 0 0 3px;overflow:hidden"></div>
<div class="ui" style="left:984.6px;top:805.6px;font-size:10.6px;line-height:13px;color:#1a1a1a;letter-spacing:0.00px;width:8.4px;overflow:hidden;">Sc</div>
<div class="abs" style="left:140.0px;top:805px;width:1px;height:14px;background:#333"></div>
<div class="abs" style="left:207.7px;top:805px;width:1px;height:14px;background:#333"></div>
<div class="abs" style="left:264.5px;top:805px;width:1px;height:14px;background:#333"></div>
<div class="abs" style="left:346.5px;top:805px;width:1px;height:14px;background:#333"></div>
<div class="abs" style="left:395.4px;top:805px;width:1px;height:14px;background:#333"></div>
<div class="abs" style="left:443.5px;top:805px;width:1px;height:14px;background:#333"></div>
<div class="abs" style="left:503.8px;top:805px;width:1px;height:14px;background:#333"></div>
<div class="abs" style="left:553.0px;top:805px;width:1px;height:14px;background:#333"></div>
<div class="abs" style="left:579.1px;top:805px;width:1px;height:14px;background:#333"></div>
<div class="abs" style="left:608.7px;top:805px;width:1px;height:14px;background:#333"></div>
<div class="abs" style="left:637.9px;top:805px;width:1px;height:14px;background:#333"></div>
<div class="abs" style="left:699.0px;top:805px;width:1px;height:14px;background:#333"></div>
<div class="abs" style="left:760.3px;top:805px;width:1px;height:14px;background:#333"></div>
<div class="abs" style="left:821.5px;top:805px;width:1px;height:14px;background:#333"></div>
<div class="abs" style="left:850.5px;top:805px;width:1px;height:14px;background:#333"></div>
<div class="abs" style="left:890.8px;top:805px;width:1px;height:14px;background:#333"></div>
<div class="abs" style="left:938.0px;top:805px;width:1px;height:14px;background:#333"></div>
<div class="abs" style="left:975.2px;top:805px;width:1px;height:14px;background:#333"></div>
<div class="abs" style="left:349.3px;top:799px;width:43.4px;height:20.9px;background:linear-gradient(#fff 0,#fff 12%,#fdfbe5 55%);border-radius:0 0 3.5px 3.5px"></div>
<div class="ui" style="left:355.8px;top:803.7px;font-size:10.6px;line-height:13px;color:#1a1a1a;letter-spacing:-0.30px;">Payroll</div>
<div class="abs" style="left:355.5px;top:816.7px;width:31px;height:1.5px;background:#1a9048"></div>
<div class="abs" style="left:999.8px;top:810px;width:2px;height:2px;background:#f0f0f0;border-radius:1px"></div>
<div class="abs" style="left:1002.9px;top:810px;width:2px;height:2px;background:#f0f0f0;border-radius:1px"></div>
<div class="abs" style="left:1006.0px;top:810px;width:2px;height:2px;background:#f0f0f0;border-radius:1px"></div>
<svg class="abs" style="left:1022px;top:806.5px;overflow:visible" width="9" height="9" viewBox="0 0 9 9"><path d="M4.5 0.5V8.5M0.5 4.5H8.5" stroke="#e8e8e8" stroke-width="1"/></svg>
<div class="abs" style="left:1048.8px;top:807.6px;width:1.6px;height:1.6px;background:#cfcfcf"></div>
<div class="abs" style="left:1048.8px;top:810.6px;width:1.6px;height:1.6px;background:#cfcfcf"></div>
<div class="abs" style="left:1048.8px;top:813.6px;width:1.6px;height:1.6px;background:#cfcfcf"></div>
<div class="abs" style="left:1061px;top:804.4px;width:310px;height:13.4px;background:#151515;border-radius:6.7px"></div>
<svg class="abs" style="left:1065px;top:808px;overflow:visible" width="5" height="6" viewBox="0 0 5 6"><polygon points="5,0 5,6 0,3" fill="#bdbdbd"/></svg>
<div class="abs" style="left:1073.6px;top:808px;width:20.6px;height:6px;background:#a8a8a8;border-radius:3px"></div>
<svg class="abs" style="left:1362px;top:808px;overflow:visible" width="5" height="6" viewBox="0 0 5 6"><polygon points="0,0 0,6 5,3" fill="#bdbdbd"/></svg>
<div class="abs" style="left:5px;top:822.6px;width:1380px;height:16.2px;background:#141414;border-top:1px solid #1c1c1c"></div>
<div class="ui" style="left:13.0px;top:826.5px;font-size:9.2px;line-height:11px;color:#e2e2e2;letter-spacing:-1.55px;">Ready</div>
<svg class="abs" style="left:47px;top:826px;overflow:visible" width="11.5" height="10.5" viewBox="0 0 11.5 10.5"><rect x="0.5" y="0.5" width="10.5" height="9.5" rx="1" fill="none" stroke="#bdbdbd" stroke-width="0.9"/><path d="M0.5 3H11M3.4 0.5V3" stroke="#bdbdbd" stroke-width="0.8"/><circle cx="7" cy="6.6" r="2.4" fill="#141414" stroke="#bdbdbd" stroke-width="0.9"/><circle cx="7" cy="6.6" r="0.9" fill="#bdbdbd"/></svg>
<svg class="abs" style="left:69.5px;top:825.6px;overflow:visible" width="11" height="11.6" viewBox="0 0 11 11.6"><circle cx="4.6" cy="1.8" r="1.3" fill="none" stroke="#e0e0e0" stroke-width="0.9"/><path d="M0.6 4.2L4.6 5L8.6 4.2M4.6 5V7.2M4.6 7.2L2.2 11M4.6 7.2L6 9" fill="none" stroke="#e0e0e0" stroke-width="0.9" stroke-linecap="round"/><path d="M7 8L10.4 11.4M10.4 8L7 11.4" stroke="#e0e0e0" stroke-width="0.9"/></svg>
<div class="ui" style="left:83.0px;top:826.5px;font-size:8.8px;line-height:11px;color:#f0f0f0;letter-spacing:-0.61px;font-weight:bold;">Accessibility: Investigate</div>
<div class="abs" style="left:1171px;top:823px;width:29px;height:15.8px;background:#242424"></div>
<svg class="abs" style="left:1180px;top:826px;overflow:visible" width="10.4" height="10.4" viewBox="0 0 10.4 10.4"><rect x="0.5" y="0.5" width="9.4" height="9.4" fill="none" stroke="#e8e8e8" stroke-width="1"/><path d="M0.5 3.6H9.9M0.5 6.8H9.9M3.6 0.5V9.9M6.8 0.5V9.9" stroke="#e8e8e8" stroke-width="1"/></svg>
<svg class="abs" style="left:1208.8px;top:826px;overflow:visible" width="11" height="10.4" viewBox="0 0 11 10.4"><rect x="0.5" y="0.5" width="10" height="9.4" fill="none" stroke="#d0d0d0" stroke-width="1"/><rect x="3" y="2.2" width="5" height="6" fill="none" stroke="#d0d0d0" stroke-width="0.9"/><path d="M5.5 2.2V8.2" stroke="#d0d0d0" stroke-width="0.7"/></svg>
<svg class="abs" style="left:1237.8px;top:826px;overflow:visible" width="10.6" height="10.4" viewBox="0 0 10.6 10.4"><rect x="0.5" y="0.5" width="9.6" height="9.4" fill="none" stroke="#d0d0d0" stroke-width="1"/><path d="M3.6 0.5V5.4H10.1M6.8 0.5V5.4" fill="none" stroke="#d0d0d0" stroke-width="1"/></svg>
<div class="abs" style="left:1262px;top:830.6px;width:5px;height:1px;background:#9a9a9a"></div>
<div class="abs" style="left:1271px;top:830.6px;width:70.5px;height:1px;background:#8c8c8c"></div>
<div class="abs" style="left:1306px;top:829px;width:1px;height:4px;background:#8c8c8c"></div>
<div class="abs" style="left:1309px;top:826.6px;width:4px;height:9px;background:#bdbdbd;border-radius:1px"></div>
<svg class="abs" style="left:1345px;top:828px;overflow:visible" width="6" height="6" viewBox="0 0 6 6"><path d="M3 0V6M0 3H6" stroke="#9a9a9a" stroke-width="1"/></svg>
<div class="ui" style="left:1360.4px;top:826.3px;font-size:8.8px;line-height:11px;color:#e0e0e0;letter-spacing:-1.30px;">140%</div>
</div></body></html>
